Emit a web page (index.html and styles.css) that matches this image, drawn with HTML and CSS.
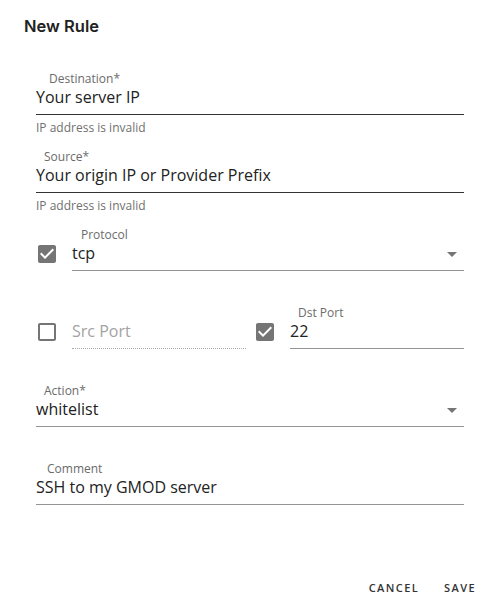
FILE: index.html
```html
<!DOCTYPE html>
<html>
<head>
<meta charset="utf-8">
<link rel="stylesheet" href="styles.css">
</head>
<body>
<div class="dialog">
  <h2 class="title">New Rule</h2>
  <div class="form">
    <div class="row">
      <div class="field">
        <label class="label off-13">Destination*</label>
        <div class="input strong">Your server IP</div>
        <div class="helper">IP address is invalid</div>
      </div>
    </div>
    <div class="row">
      <div class="field">
        <label class="label off-8">Source*</label>
        <div class="input strong">Your origin IP or Provider Prefix</div>
        <div class="helper">IP address is invalid</div>
      </div>
    </div>
    <div class="row">
      <div class="col">
        <svg class="cb" viewBox="0 0 24 24"><path d="M19 3H5c-1.11 0-2 .9-2 2v14c0 1.1.89 2 2 2h14c1.11 0 2-.9 2-2V5c0-1.1-.89-2-2-2zm-9 14l-5-5 1.41-1.41L10 14.17l7.59-7.59L19 8l-9 9z"/></svg>
        <div class="field">
          <label class="label off-9">Protocol</label>
          <div class="input select">tcp<svg class="arrow" viewBox="0 0 24 24"><path d="M7 10l5 5 5-5z"/></svg></div>
        </div>
      </div>
    </div>
    <div class="row split">
      <div class="col">
        <svg class="cb" viewBox="0 0 24 24"><path d="M19 5v14H5V5h14m0-2H5c-1.1 0-2 .9-2 2v14c0 1.1.9 2 2 2h14c1.1 0 2-.9 2-2V5c0-1.1-.9-2-2-2z"/></svg>
        <div class="field">
          <label class="label empty">&nbsp;</label>
          <div class="input disabled">Src Port</div>
        </div>
      </div>
      <div class="col">
        <svg class="cb" viewBox="0 0 24 24"><path d="M19 3H5c-1.11 0-2 .9-2 2v14c0 1.1.89 2 2 2h14c1.11 0 2-.9 2-2V5c0-1.1-.89-2-2-2zm-9 14l-5-5 1.41-1.41L10 14.17l7.59-7.59L19 8l-9 9z"/></svg>
        <div class="field">
          <label class="label off-8">Dst Port</label>
          <div class="input">22</div>
        </div>
      </div>
    </div>
    <div class="row">
      <div class="field">
        <label class="label off-8">Action*</label>
        <div class="input select">whitelist<svg class="arrow" viewBox="0 0 24 24"><path d="M7 10l5 5 5-5z"/></svg></div>
      </div>
    </div>
    <div class="row">
      <div class="field">
        <label class="label off-11">Comment</label>
        <div class="input">SSH to my GMOD server</div>
      </div>
    </div>
  </div>
  <div class="actions">
    <button class="btn">Cancel</button>
    <button class="btn">Save</button>
  </div>
</div>
</body>
</html>
```
FILE: styles.css
```css
* { box-sizing: border-box; }
html, body { margin: 0; padding: 0; background: #fff; }
body {
  font-family: "Open Sans", "Noto Sans", sans-serif;
  color: rgba(0,0,0,0.87);
}
.dialog {
  min-height: 100vh;
  display: flex;
  flex-direction: column;
}
.title {
  margin: 0;
  padding: 16px 24px 0 24px;
  font-family: "Inter", "Open Sans", sans-serif;
  font-size: 16.5px;
  line-height: 20px;
  font-weight: 600;
  color: #222;
}
.form {
  display: flex;
  flex-direction: column;
  padding: 36px 33px 0 36px;
}
.row {
  height: 78px;
  display: flex;
}
.row.split { gap: 8px; }
.row.split .col { flex: 1; }
.col {
  flex: 1;
  display: flex;
  align-items: flex-start;
}
.cb {
  width: 24px;
  height: 24px;
  fill: #757575;
  margin: 14px 13px 0 -1px;
  flex: none;
}
.field {
  flex: 1;
  display: flex;
  flex-direction: column;
  min-width: 0;
}
.label {
  display: block;
  height: 15px;
  font-size: 12px;
  line-height: 14px;
  color: #6b6b6b;
}
.off-8 { padding-left: 8px; }
.off-9 { padding-left: 9px; }
.off-11 { padding-left: 11px; }
.off-13 { padding-left: 13px; }
.input {
  position: relative;
  font-size: 16px;
  line-height: 20px;
  height: 28px;
  padding-bottom: 7px;
  border-bottom: 1px solid #949494;
  color: #222;
  white-space: nowrap;
}
.input.strong { border-bottom-color: #333; }
.input.disabled {
  color: #a3a3a3;
  border-bottom: 1px dotted #aaa;
}
.arrow {
  position: absolute;
  right: 0;
  top: -1px;
  width: 24px;
  height: 24px;
  fill: #757575;
}
.helper {
  margin-top: 6px;
  font-size: 12px;
  line-height: 14px;
  color: #707070;
}
.actions {
  margin-top: auto;
  display: flex;
  justify-content: flex-end;
  gap: 25px;
  padding: 0 21px 15px 0;
}
.btn {
  background: none;
  border: 0;
  padding: 0;
  font-family: inherit;
  font-size: 11px;
  line-height: 16px;
  font-weight: 600;
  letter-spacing: 1.4px;
  text-transform: uppercase;
  color: #333;
}
```
